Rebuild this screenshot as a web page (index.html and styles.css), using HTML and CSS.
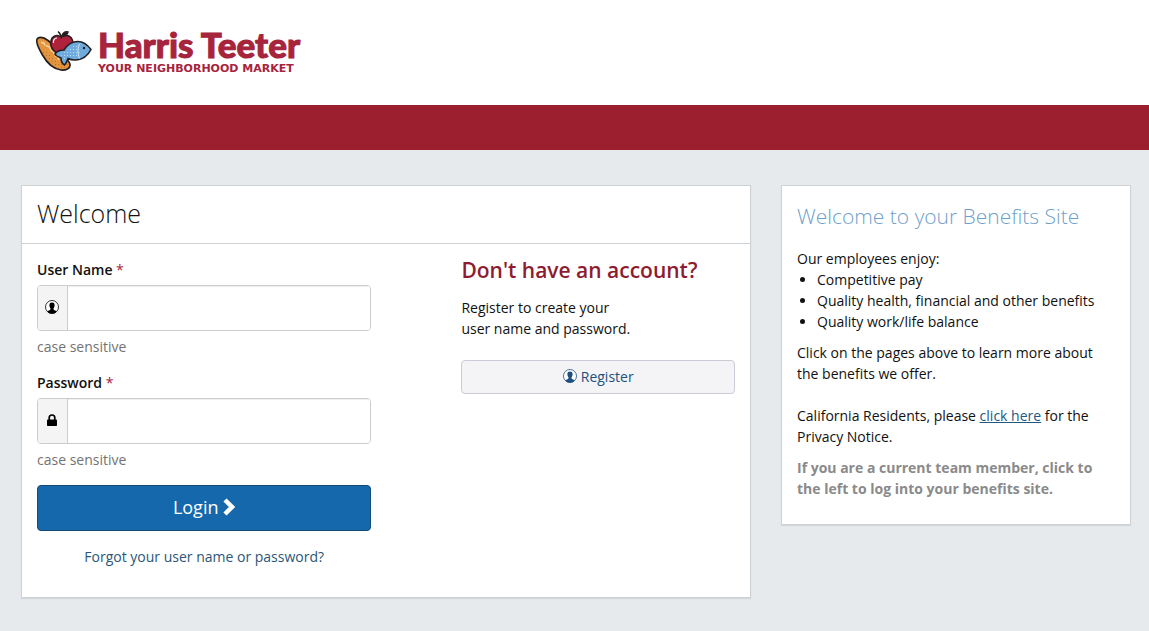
FILE: index.html
```html
<!DOCTYPE html>
<html lang="en">
<head>
<meta charset="utf-8">
<meta name="viewport" content="width=device-width, initial-scale=1">
<title>Harris Teeter Benefits</title>
<link rel="stylesheet" href="styles.css">
</head>
<body>
<svg class="sprite" aria-hidden="true">
  <symbol id="icon-user" viewBox="0 0 28 28">
    <circle cx="14" cy="14" r="13" fill="#fff" stroke="currentColor" stroke-width="1.6"/>
    <path fill="currentColor" d="M14 5c-4 0-5.400 2.500-5.200 6 .2 3.200 1.500 4.500 2.200 6 .5 1.500-.5 2.600-2 3.300L4.500 22.500C7 26 10 27.500 14 27.500s7-1.500 9.500-5L19 20.300c-1.500-.7-2.500-1.800-2-3.300.7-1.500 2-2.800 2.200-6C19.400 7.500 18 5 14 5z"/>
  </symbol>
</svg>

<header class="site-header">
  <a class="logo" href="#" aria-label="Harris Teeter, your neighborhood market">
    <svg class="logo-mark" viewBox="0 0 56 42" aria-hidden="true">
      <defs>
        <pattern id="dots" width="3" height="3" patternUnits="userSpaceOnUse"><circle cx="1.500" cy="1.500" r=".6" fill="#c9e4f6"/></pattern>
        <pattern id="crumbs" width="3" height="3" patternUnits="userSpaceOnUse"><circle cx="1.500" cy="1.500" r=".6" fill="#a9652c"/></pattern>
      </defs>
      <path d="M1.500 8.500C4 6.800 8 7.500 12 10.500c6 4.500 10 10 14.500 14.500 4 4 7 6 7.500 9.500.5 4-4 6-9 5.500C18 39 11 33 6.500 25 3 19-1 11 1.500 8.500z" fill="#e4953e" stroke="#241f21" stroke-width="1.700"/>
      <path d="M3 16c4 9 11 19 22 22 5 1 7-1 7-4-5 2-10-2-14-6C12 23 7 20 3 16z" fill="url(#crumbs)"/>
      <path d="M5 12.500c3-.5 4 1.500 3.500 3M10 16c3-.5 4.500 2 4 3.500M14.500 20.500c3 0 4 2 3.500 4M19 26c3 0 4 2 3.500 4" fill="none" stroke="#fbd7a0" stroke-width="1.500"/>
      <path d="M25 7c-4-3-9-1-10 4-1 5 1.500 9.500 5 11.500l5 .5 8-3c4-4 5-9 2-12.500-2.500-2.500-6-2.500-10-.5z" fill="#b0223b" stroke="#241f21" stroke-width="1.600"/>
      <path d="M17.500 13c-.5-3 1-5 3.500-5" fill="none" stroke="#fff" stroke-width="1.200"/>
      <path d="M25.500 8.500C25 5 24 3 22 1.500M26 6c1-3 3.500-4.500 6-4-1 3-3.500 4.500-6 4z" fill="#241f21" stroke="#241f21" stroke-width="1.500"/>
      <path d="M28 20c3-5 8-8.500 14-8.500 5.500 0 10 4 13 8-3 6-9 10-15 10.500-3 .2-6-.5-8-1.500-1 2-1.500 4.500-3.500 6.500-2.500-1.500-3.500-4-3.500-7-2.500-1-5-1.500-6-4 2-3 6-4 9-4z" fill="#6fabdc" stroke="#241f21" stroke-width="1.600"/>
      <path d="M24 23l6-1c3-5 7-7 11-7l3 7-4 6c-4 .5-7-.5-10-2l-2 5z" fill="url(#dots)"/>
      <path d="M44 13.500c-2.500 3-2.500 11-.5 15" fill="none" stroke="#d6ebf8" stroke-width="1"/>
      <circle cx="48" cy="18" r="1.200" fill="#241f21"/>
    </svg>
    <span class="logo-text">
      <span class="logo-name">Harris Teeter</span>
      <span class="logo-tagline">YOUR NEIGHBORHOOD MARKET</span>
    </span>
  </a>
</header>
<nav class="site-nav" aria-label="Main"></nav>

<main class="row">
  <div class="col-main">
    <section class="card">
      <h1 class="card-title">Welcome</h1>
      <div class="card-body">
        <form class="login">
          <label class="field-label" for="username">User Name <span class="required">*</span></label>
          <div class="input-group">
            <span class="addon"><svg class="icon-user"><use href="#icon-user"/></svg></span>
            <input class="input" id="username" type="text">
          </div>
          <p class="hint">case sensitive</p>
          <label class="field-label" for="password">Password <span class="required">*</span></label>
          <div class="input-group">
            <span class="addon"><svg class="icon-lock" viewBox="0 0 10 12"><path d="M2.200 6V3.800a2.800 2.800 0 0 1 5.600 0V6" fill="none" stroke="currentColor" stroke-width="1.700"/><rect y="5.500" width="10" height="6.500" rx=".8" fill="currentColor"/></svg></span>
            <input class="input" id="password" type="password">
          </div>
          <p class="hint">case sensitive</p>
          <button class="btn btn-primary" type="button">Login
            <svg class="icon-chevron" viewBox="0 0 12 18"><path d="M2 2l7 7-7 7" fill="none" stroke="currentColor" stroke-width="4.500"/></svg>
          </button>
          <a class="forgot" href="#">Forgot your user name or password?</a>
        </form>
        <div class="register">
          <h2 class="register-title">Don't have an account?</h2>
          <p class="register-text">Register to create your<br>user name and password.</p>
          <button class="btn btn-default" type="button"><svg class="icon-user"><use href="#icon-user"/></svg>Register</button>
        </div>
      </div>
    </section>
  </div>
  <div class="col-side">
    <aside class="card side-card">
      <h2 class="side-title">Welcome to your Benefits Site</h2>
      <p class="side-intro">Our employees enjoy:</p>
      <ul class="side-list">
        <li>Competitive pay</li>
        <li>Quality health, financial and other benefits</li>
        <li>Quality work/life balance</li>
      </ul>
      <p class="side-text">Click on the pages above to learn more about the benefits we offer.<br><br>California Residents, please <a class="side-link" href="#">click here</a> for the Privacy Notice.</p>
      <p class="side-text side-note">If you are a current team member, click to the left to log into your benefits site.</p>
    </aside>
  </div>
</main>
</body>
</html>
```
FILE: styles.css
```css
* { box-sizing: border-box; }

body {
  margin: 0;
  background: #e6eaed;
  color: #111;
  font: 14px/21px "Open Sans", sans-serif;
}

h1, h2, p, ul { margin: 0; }

.sprite {
  position: absolute;
  width: 0;
  height: 0;
}

.site-header {
  display: flex;
  padding: 30px 36px 33px;
  background: #fff;
}

.logo {
  display: flex;
  gap: 6px;
  color: #a6243c;
  text-decoration: none;
}

.logo-mark {
  width: 56px;
  height: 42px;
}

.logo-text {
  display: flex;
  flex-direction: column;
  height: 42px;
  white-space: nowrap;
}

.logo-name {
  font: 900 35px/28px Lato, sans-serif;
  -webkit-text-stroke: 1px #a6243c;
}

.logo-tagline {
  font: 700 11px/21px "DejaVu Sans", sans-serif;
}

.site-nav {
  height: 45px;
  background: #9b1f2f;
}

.row {
  display: flex;
  align-items: flex-start;
  padding: 35px 3px 32px 6px;
}

.col-main {
  width: 66.6667%;
  padding: 0 15px;
}

.col-side {
  width: 33.3333%;
  padding: 0 15px;
}

.card {
  background: #fff;
  border: 1px solid #cdd2d6;
  box-shadow: 0 1px 1px #d3d7da;
}

.card-title {
  padding: 9px 15px 12px;
  border-bottom: 1px solid #cdd2d6;
  font-size: 25px;
  font-weight: 300;
  line-height: 36px;
}

.card-body {
  display: grid;
  grid-template-columns: 11fr 9fr;
  gap: 90px;
  padding: 15px 15px 30px;
}

.login {
  display: flex;
  flex-direction: column;
}

.field-label {
  margin-bottom: 5px;
  font-weight: 600;
}

.required {
  color: #a6243c;
  font-weight: 400;
}

.input-group {
  display: flex;
  height: 46px;
  border: 1px solid #ccc;
  border-radius: 4px;
  overflow: hidden;
}

.addon {
  display: flex;
  align-items: center;
  justify-content: center;
  width: 30px;
  padding: 0 1px 2px 0;
  border-right: 1px solid #ccc;
  background: #f4f4f4;
  color: #000;
}

.input {
  flex: 1;
  min-width: 0;
  padding: 6px 12px;
  border: 0;
  background: #fff;
  box-shadow: inset 0 1px 1px #eee;
  font: inherit;
}

.hint {
  margin: 5px 0 15px;
  color: #737373;
}

.icon-user {
  width: 14px;
  height: 14px;
}

.icon-lock {
  width: 10px;
  height: 12px;
}

.icon-chevron {
  width: 12px;
  height: 18px;
}

.btn {
  display: flex;
  align-items: center;
  justify-content: center;
  width: 100%;
  border: 1px solid;
  border-radius: 4px;
  font-family: inherit;
}

.btn-primary {
  gap: 5px;
  height: 46px;
  padding: 0 6px 2px;
  border-color: #144b75;
  background: #1668ad;
  color: #fff;
  font-size: 18px;
}

.btn-default {
  gap: 4px;
  height: 34px;
  padding: 0 6px 2px;
  border-color: #ccccd6;
  background: #f4f4f6;
  color: #1d5080;
  font-size: 14px;
}

.forgot {
  align-self: center;
  margin-top: 15px;
  color: #2b5678;
  text-decoration: none;
}

.register-title {
  color: #8e1c30;
  font-size: 21px;
  font-weight: 600;
  line-height: 22px;
}

.register-text {
  margin: 16px 0 21px;
}

.side-card {
  padding: 15px 15px 25px;
}

.side-title {
  margin-bottom: 17px;
  color: #6f9fcb;
  font-size: 21px;
  font-weight: 300;
  line-height: 30px;
}

.side-list {
  margin-bottom: 10px;
  padding-left: 20px;
}

.side-text {
  margin-bottom: 10px;
}

.side-link {
  color: #23597f;
}

.side-note {
  margin-bottom: 0;
  color: #8a8a8a;
  font-weight: 700;
}
```
